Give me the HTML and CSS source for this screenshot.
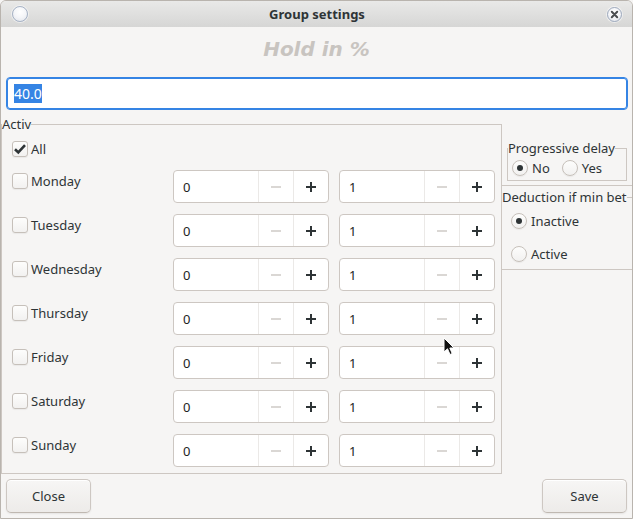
FILE: index.html
```html
<!DOCTYPE html>
<html>
<head>
<meta charset="utf-8">
<link rel="stylesheet" href="styles.css">
</head>
<body>
<div class="window">
  <div class="titlebar">
    <span class="tb-btn tb-left"></span>
    <span class="title">Group settings</span>
    <span class="tb-btn tb-close"><svg width="15" height="15" viewBox="0 0 15 15"><path d="M4.8 4.8L10.2 10.2M10.2 4.8L4.8 10.2" stroke="#4a4d50" stroke-width="2" stroke-linecap="round"/></svg></span>
  </div>
  <div class="heading">Hold in %</div>
  <div class="entry"><span class="sel">40.0</span></div>
  <div class="main">
    <fieldset class="frame activ">
      <legend>Activ</legend>
      <div class="days">
        <label class="check all"><span class="box"><svg width="16" height="16" viewBox="0 0 16 16"><path d="M3 8.2L6.3 11.4L13 4.2" fill="none" stroke="#2e3436" stroke-width="2.6"/></svg></span>All</label>

        <label class="check day"><span class="box"></span>Monday</label>
        <div class="spin"><span class="val">0</span><span class="sb minus"><svg width="16" height="16" viewBox="0 0 16 16"><path d="M3 8h10" stroke="currentColor" stroke-width="2"/></svg></span><span class="sb plus"><svg width="16" height="16" viewBox="0 0 16 16"><path d="M8 3v10M3 8h10" stroke="currentColor" stroke-width="2"/></svg></span></div>
        <div class="spin"><span class="val">1</span><span class="sb minus"><svg width="16" height="16" viewBox="0 0 16 16"><path d="M3 8h10" stroke="currentColor" stroke-width="2"/></svg></span><span class="sb plus"><svg width="16" height="16" viewBox="0 0 16 16"><path d="M8 3v10M3 8h10" stroke="currentColor" stroke-width="2"/></svg></span></div>

        <label class="check day"><span class="box"></span>Tuesday</label>
        <div class="spin"><span class="val">0</span><span class="sb minus"><svg width="16" height="16" viewBox="0 0 16 16"><path d="M3 8h10" stroke="currentColor" stroke-width="2"/></svg></span><span class="sb plus"><svg width="16" height="16" viewBox="0 0 16 16"><path d="M8 3v10M3 8h10" stroke="currentColor" stroke-width="2"/></svg></span></div>
        <div class="spin"><span class="val">1</span><span class="sb minus"><svg width="16" height="16" viewBox="0 0 16 16"><path d="M3 8h10" stroke="currentColor" stroke-width="2"/></svg></span><span class="sb plus"><svg width="16" height="16" viewBox="0 0 16 16"><path d="M8 3v10M3 8h10" stroke="currentColor" stroke-width="2"/></svg></span></div>

        <label class="check day"><span class="box"></span>Wednesday</label>
        <div class="spin"><span class="val">0</span><span class="sb minus"><svg width="16" height="16" viewBox="0 0 16 16"><path d="M3 8h10" stroke="currentColor" stroke-width="2"/></svg></span><span class="sb plus"><svg width="16" height="16" viewBox="0 0 16 16"><path d="M8 3v10M3 8h10" stroke="currentColor" stroke-width="2"/></svg></span></div>
        <div class="spin"><span class="val">1</span><span class="sb minus"><svg width="16" height="16" viewBox="0 0 16 16"><path d="M3 8h10" stroke="currentColor" stroke-width="2"/></svg></span><span class="sb plus"><svg width="16" height="16" viewBox="0 0 16 16"><path d="M8 3v10M3 8h10" stroke="currentColor" stroke-width="2"/></svg></span></div>

        <label class="check day"><span class="box"></span>Thursday</label>
        <div class="spin"><span class="val">0</span><span class="sb minus"><svg width="16" height="16" viewBox="0 0 16 16"><path d="M3 8h10" stroke="currentColor" stroke-width="2"/></svg></span><span class="sb plus"><svg width="16" height="16" viewBox="0 0 16 16"><path d="M8 3v10M3 8h10" stroke="currentColor" stroke-width="2"/></svg></span></div>
        <div class="spin"><span class="val">1</span><span class="sb minus"><svg width="16" height="16" viewBox="0 0 16 16"><path d="M3 8h10" stroke="currentColor" stroke-width="2"/></svg></span><span class="sb plus"><svg width="16" height="16" viewBox="0 0 16 16"><path d="M8 3v10M3 8h10" stroke="currentColor" stroke-width="2"/></svg></span></div>

        <label class="check day"><span class="box"></span>Friday</label>
        <div class="spin"><span class="val">0</span><span class="sb minus"><svg width="16" height="16" viewBox="0 0 16 16"><path d="M3 8h10" stroke="currentColor" stroke-width="2"/></svg></span><span class="sb plus"><svg width="16" height="16" viewBox="0 0 16 16"><path d="M8 3v10M3 8h10" stroke="currentColor" stroke-width="2"/></svg></span></div>
        <div class="spin"><span class="val">1</span><span class="sb minus"><svg width="16" height="16" viewBox="0 0 16 16"><path d="M3 8h10" stroke="currentColor" stroke-width="2"/></svg></span><span class="sb plus"><svg width="16" height="16" viewBox="0 0 16 16"><path d="M8 3v10M3 8h10" stroke="currentColor" stroke-width="2"/></svg></span></div>

        <label class="check day"><span class="box"></span>Saturday</label>
        <div class="spin"><span class="val">0</span><span class="sb minus"><svg width="16" height="16" viewBox="0 0 16 16"><path d="M3 8h10" stroke="currentColor" stroke-width="2"/></svg></span><span class="sb plus"><svg width="16" height="16" viewBox="0 0 16 16"><path d="M8 3v10M3 8h10" stroke="currentColor" stroke-width="2"/></svg></span></div>
        <div class="spin"><span class="val">1</span><span class="sb minus"><svg width="16" height="16" viewBox="0 0 16 16"><path d="M3 8h10" stroke="currentColor" stroke-width="2"/></svg></span><span class="sb plus"><svg width="16" height="16" viewBox="0 0 16 16"><path d="M8 3v10M3 8h10" stroke="currentColor" stroke-width="2"/></svg></span></div>

        <label class="check day"><span class="box"></span>Sunday</label>
        <div class="spin"><span class="val">0</span><span class="sb minus"><svg width="16" height="16" viewBox="0 0 16 16"><path d="M3 8h10" stroke="currentColor" stroke-width="2"/></svg></span><span class="sb plus"><svg width="16" height="16" viewBox="0 0 16 16"><path d="M8 3v10M3 8h10" stroke="currentColor" stroke-width="2"/></svg></span></div>
        <div class="spin"><span class="val">1</span><span class="sb minus"><svg width="16" height="16" viewBox="0 0 16 16"><path d="M3 8h10" stroke="currentColor" stroke-width="2"/></svg></span><span class="sb plus"><svg width="16" height="16" viewBox="0 0 16 16"><path d="M8 3v10M3 8h10" stroke="currentColor" stroke-width="2"/></svg></span></div>
      </div>
    </fieldset>
    <div class="side">
      <div class="side-top">
        <fieldset class="frame prog">
          <legend>Progressive delay</legend>
          <div class="radios-inline">
            <label class="radio"><span class="dot on"></span>No</label>
            <label class="radio"><span class="dot"></span>Yes</label>
          </div>
        </fieldset>
      </div>
      <fieldset class="frame deduct">
        <legend>Deduction if min bet</legend>
        <div class="radios-col">
          <label class="radio"><span class="dot on"></span>Inactive</label>
          <label class="radio"><span class="dot"></span>Active</label>
        </div>
      </fieldset>
    </div>
  </div>
  <div class="footer">
    <button class="btn">Close</button>
    <button class="btn">Save</button>
  </div>
  <svg class="cursor" width="12" height="19" viewBox="0 0 12 19"><path d="M1 1L1 15L4.5 11.8L7 17.5L9.2 16.5L6.8 11L11 11Z" fill="#111" stroke="#fff" stroke-width="1"/></svg>
</div>
</body>
</html>
```

FILE: styles.css
```css
html, body {
  margin: 0;
  padding: 0;
  background: #f6f5f4;
}

.window {
  position: relative;
  width: 633px;
  height: 519px;
  box-sizing: border-box;
  border: 1px solid #b9b4ae;
  border-radius: 6px 6px 0 0;
  background: #f6f5f4;
  overflow: hidden;
  font-family: "Noto Sans", "Open Sans", sans-serif;
  font-size: 13px;
  color: #2e3436;
}

.titlebar {
  height: 26px;
  display: grid;
  grid-template-columns: 1fr auto 1fr;
  align-items: center;
  padding: 0 10px 0 11px;
  background: linear-gradient(#e9e9e8, #d6d6d5);
}

.title {
  font-weight: bold;
  font-size: 13px;
  color: #2e3436;
}

.tb-btn {
  display: block;
  box-sizing: border-box;
  border-radius: 50%;
  border: 1px solid #a7b3c6;
  background: radial-gradient(circle at 50% 35%, #ffffff 0%, #f4f5f8 50%, #dfe2e8 100%);
  box-shadow: 0 0 0 1px rgba(255,255,255,0.5);
}

.tb-left {
  width: 16px;
  height: 16px;
  justify-self: start;
}

.tb-close {
  width: 15px;
  height: 15px;
  justify-self: end;
  margin-top: 1px;
  border-color: #9fabbf;
}

.tb-close svg {
  display: block;
  margin: -1px;
}

.heading {
  padding-top: 10px;
  height: 24px;
  line-height: 24px;
  text-align: center;
  font-family: "DejaVu Sans", sans-serif;
  font-weight: bold;
  font-style: italic;
  font-size: 20px;
  color: #c8c4c0;
}

.entry {
  margin: 16px 4px 0 5px;
  height: 33px;
  box-sizing: border-box;
  border: 1px solid #3584e4;
  box-shadow: inset 0 0 0 1px #3584e4;
  border-radius: 4px;
  background: #fff;
  padding-left: 7px;
  display: flex;
  align-items: center;
}

.sel {
  background: #3584e4;
  color: #fff;
  font-size: 14px;
  line-height: 19px;
}

.main {
  display: flex;
  margin-top: 6px;
  height: 358px;
}

.frame {
  margin: 0;
  padding: 0;
  border: 1px solid #cdc7c2;
  min-inline-size: 0;
}

.frame legend {
  padding: 0;
  font-size: 13px;
  line-height: 16px;
  color: #2e3436;
}

.activ {
  width: 501px;
  box-sizing: border-box;
  flex: none;
}

.days {
  display: grid;
  grid-template-columns: 151px 156px 156px;
  grid-template-rows: 19px repeat(7, 33px);
  column-gap: 10px;
  row-gap: 11px;
  padding: 8px 6px 5px 10px;
}

.check {
  display: flex;
  align-items: center;
  gap: 3px;
  height: 16px;
  align-self: start;
  white-space: nowrap;
}

.all {
  grid-column: 1 / -1;
  margin-top: 1px;
}

.day {
  grid-column: 1;
  margin-top: 3px;
}

.box {
  width: 16px;
  height: 16px;
  box-sizing: border-box;
  border: 1px solid #c6c0ba;
  border-radius: 3px;
  background: linear-gradient(#fdfdfc, #f2f1f0);
  box-shadow: 0 1px 1px rgba(0,0,0,0.05);
  flex: none;
  position: relative;
}

.box svg {
  display: block;
  margin: -1px;
}

.spin {
  display: flex;
  height: 33px;
  box-sizing: border-box;
  border: 1px solid #cdc7c2;
  border-radius: 4px;
  background: #fff;
}

.val {
  width: 84px;
  box-sizing: border-box;
  padding-left: 9px;
  display: flex;
  align-items: center;
  color: #1e1e1e;
}

.sb {
  width: 35px;
  box-sizing: border-box;
  border-left: 1px solid #ebe9e7;
  display: flex;
  align-items: center;
  justify-content: center;
}

.sb svg {
  display: block;
}

.minus {
  color: #dad7d4;
}

.plus {
  color: #2e3436;
}

.side {
  width: 130px;
  flex: none;
  display: flex;
  flex-direction: column;
}

.side-top {
  height: 70px;
  box-sizing: border-box;
  border-bottom: 1px solid #cdc7c2;
  padding: 24px 5px 0 5px;
}

.prog {
  width: 120px;
  box-sizing: border-box;
}

.radios-inline {
  display: flex;
  gap: 12px;
  padding: 4px 0 4px 4px;
}

.radio {
  display: flex;
  align-items: center;
  gap: 4px;
  height: 16px;
  white-space: nowrap;
}

.dot {
  width: 16px;
  height: 16px;
  box-sizing: border-box;
  border: 1px solid #c6c0ba;
  border-radius: 50%;
  background: linear-gradient(#fdfdfc, #f2f1f0);
  box-shadow: 0 1px 1px rgba(0,0,0,0.05);
  display: flex;
  align-items: center;
  justify-content: center;
  flex: none;
}

.dot.on::after {
  content: "";
  width: 6px;
  height: 6px;
  border-radius: 50%;
  background: #2e3436;
}

.deduct {
  margin: 3px 0 0 -1px;
  width: 131px;
  box-sizing: border-box;
  border-right: none;
}

.radios-col {
  display: flex;
  flex-direction: column;
  gap: 17px;
  padding: 8px 0 7px 9px;
}

.footer {
  display: flex;
  justify-content: space-between;
  padding: 5px 5px 4px 5px;
}

.btn {
  width: 85px;
  height: 34px;
  box-sizing: border-box;
  border: 1px solid #cdc7c2;
  border-bottom-color: #bfb8b1;
  border-radius: 5px;
  background: linear-gradient(#f7f6f5, #edebe9);
  box-shadow: inset 0 1px #ffffff, 0 1px 2px rgba(0,0,0,0.07);
  font-family: "Noto Sans", "Open Sans", sans-serif;
  font-size: 13px;
  color: #2e3436;
  padding: 0;
}

.cursor {
  position: absolute;
  left: 442px;
  top: 336px;
}
```
